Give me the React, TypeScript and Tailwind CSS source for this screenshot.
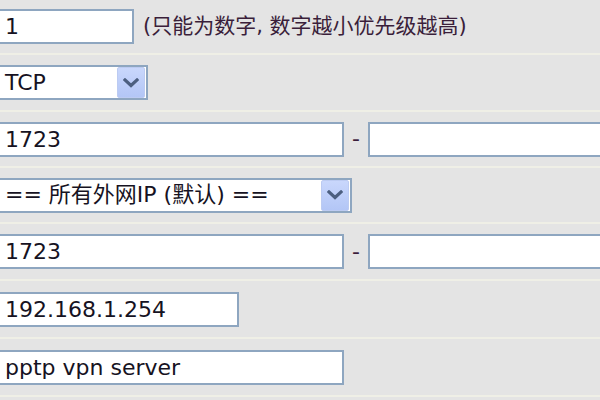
import React from "react";

const FONT = '"DejaVu Sans", "Noto Sans CJK SC", sans-serif';

function TextBox({ value, width }: { value: string; width: number }) {
  return (
    <input
      readOnly
      defaultValue={value}
      style={{ width }}
      className="h-[35px] shrink-0 border-2 border-[#8ea6c0] bg-white pl-[9px] text-[22px] leading-none text-[#161222] outline-none"
    />
  );
}

function Chevron() {
  return (
    <svg width="16" height="10" viewBox="0 0 16 10" className="block">
      <path d="M2 2 L8 7.5 L14 2" fill="none" stroke="#4c5f80" strokeWidth="3.2" strokeLinecap="square" strokeLinejoin="miter" />
    </svg>
  );
}

function SelectBox({ value, width }: { value: string; width: number }) {
  return (
    <div
      style={{ width }}
      className="flex h-[35px] shrink-0 items-center border-2 border-[#8ea6c0] bg-white pl-[9px] pr-px"
    >
      <span className="flex-1 whitespace-nowrap text-[22px] leading-none text-[#161222]">{value}</span>
      <div className="flex h-[31px] w-[28px] items-center justify-center rounded-[2px] border border-[#bccbf2] bg-gradient-to-b from-[#c9d7fc] to-[#b3c6f6]">
        <Chevron />
      </div>
    </div>
  );
}

function Row({ h, children }: { h: number; children: React.ReactNode }) {
  return (
    <div style={{ height: h }} className="flex items-center border-b-2 border-[#efefe6] pl-0">
      {children}
    </div>
  );
}

function Dash() {
  return <span className="mx-[8px] text-[22px] leading-none text-[#3a1e3a]">-</span>;
}

export default function App() {
  return (
    <div
      className="h-[400px] w-[600px] overflow-hidden bg-[#e4e4e4]"
      style={{ fontFamily: FONT }}
    >
      <div className="ml-[-6px] w-[620px]">
        <Row h={55}>
          <TextBox value="1" width={140} />
          <span className="ml-[9px] whitespace-nowrap text-[21px] leading-none text-[#3a1e3a]">
            (只能为数字, 数字越小优先级越高)
          </span>
        </Row>
        <Row h={57}>
          <SelectBox value="TCP" width={154} />
        </Row>
        <Row h={56}>
          <TextBox value="1723" width={350} />
          <Dash />
          <TextBox value="" width={260} />
        </Row>
        <Row h={56}>
          <SelectBox value="== 所有外网IP (默认) ==" width={358} />
        </Row>
        <Row h={57}>
          <TextBox value="1723" width={350} />
          <Dash />
          <TextBox value="" width={260} />
        </Row>
        <Row h={58}>
          <TextBox value="192.168.1.254" width={245} />
        </Row>
        <Row h={58}>
          <TextBox value="pptp vpn server" width={350} />
        </Row>
      </div>
    </div>
  );
}
